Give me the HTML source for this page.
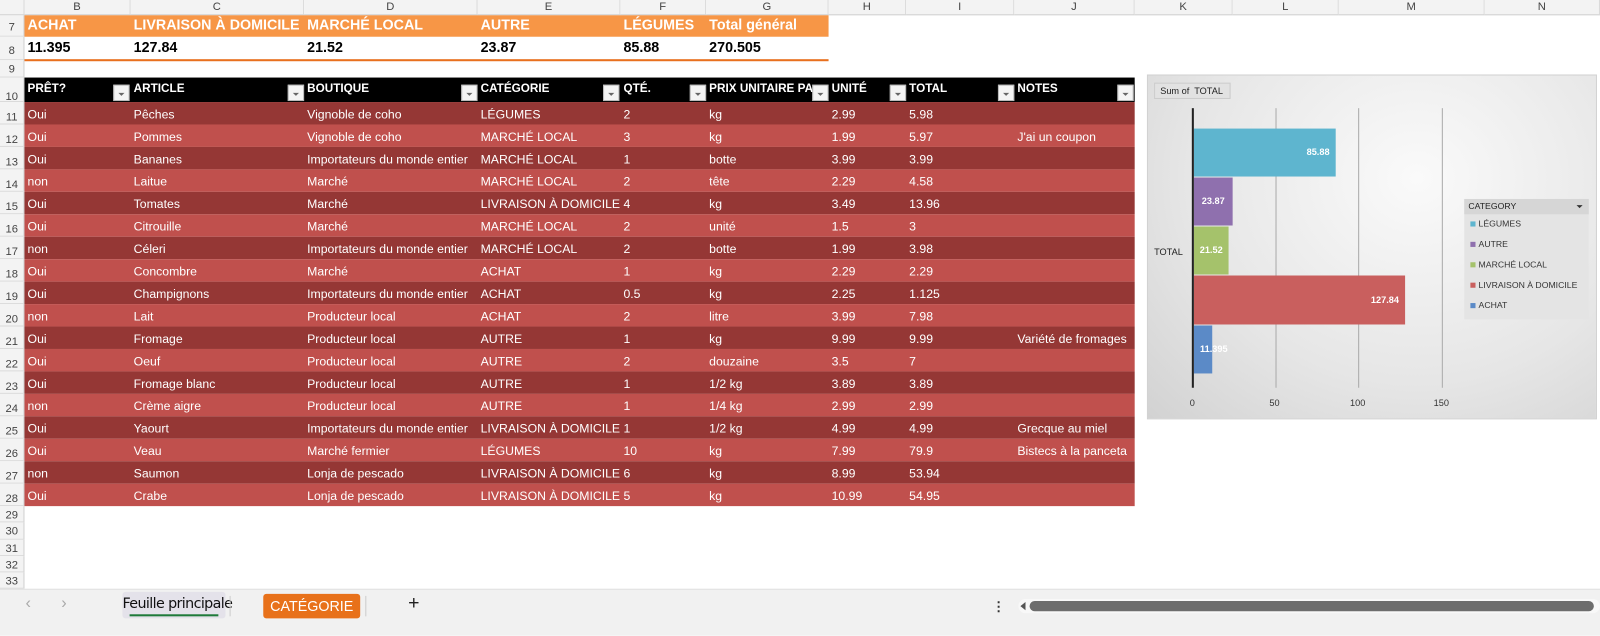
<!DOCTYPE html>
<html><head><meta charset="utf-8"><style>
*{margin:0;padding:0;box-sizing:border-box}
html,body{width:1600px;height:623px;overflow:hidden;background:#fff}
#w{position:absolute;left:0;top:0;width:1568px;height:611px;transform:scale(1.0204);transform-origin:0 0;font-family:"Liberation Sans",Arial,sans-serif;font-size:12px}
.a{position:absolute;white-space:nowrap}
.ch{top:0;height:15px;background:#f3f3f3;border-right:1px solid #dadada;border-bottom:1px solid #d0d0d0;text-align:center;font-size:11px;color:#444;line-height:14px}
.rh{left:0;width:24px;background:#f3f3f3;border-bottom:1px solid #dadada;border-right:1px solid #d0d0d0;text-align:center;font-size:11px;color:#444}
.row{left:24px;width:1088px;height:22px;color:#fff;font-size:12px;line-height:24px}
.row span{position:absolute;top:0}
.d{background:#953735}.l{background:#c0504d}
.hd span{position:absolute;color:#fff;font-weight:bold;font-size:11.5px;top:5px}
.fb{position:absolute;top:83px;width:16px;height:16px;background:#f4f4f4;border:1px solid #bbb}
.fb:after{content:"";position:absolute;left:4px;top:7px;border-left:3px solid transparent;border-right:3px solid transparent;border-top:3px solid #666}
</style></head><body><div id="w">
<div class="a ch" style="left:0;width:24px"></div>
<div class="a ch" style="left:24px;width:104px">B</div>
<div class="a ch" style="left:128px;width:170px">C</div>
<div class="a ch" style="left:298px;width:170px">D</div>
<div class="a ch" style="left:468px;width:140px">E</div>
<div class="a ch" style="left:608px;width:84px">F</div>
<div class="a ch" style="left:692px;width:120px">G</div>
<div class="a ch" style="left:812px;width:76px">H</div>
<div class="a ch" style="left:888px;width:106px">I</div>
<div class="a ch" style="left:994px;width:118px">J</div>
<div class="a ch" style="left:1112px;width:96px">K</div>
<div class="a ch" style="left:1208px;width:104px">L</div>
<div class="a ch" style="left:1312px;width:143px">M</div>
<div class="a ch" style="left:1455px;width:113px">N</div>
<div class="a rh" style="top:15px;height:21px;line-height:24px">7</div>
<div class="a rh" style="top:36px;height:23px;line-height:28px">8</div>
<div class="a rh" style="top:59px;height:17px;line-height:18px">9</div>
<div class="a rh" style="top:76px;height:24px;line-height:38px">10</div>
<div class="a rh" style="top:100px;height:22px;line-height:30px">11</div>
<div class="a rh" style="top:122px;height:22px;line-height:30px">12</div>
<div class="a rh" style="top:144px;height:22px;line-height:30px">13</div>
<div class="a rh" style="top:166px;height:22px;line-height:30px">14</div>
<div class="a rh" style="top:188px;height:22px;line-height:30px">15</div>
<div class="a rh" style="top:210px;height:22px;line-height:30px">16</div>
<div class="a rh" style="top:232px;height:22px;line-height:30px">17</div>
<div class="a rh" style="top:254px;height:22px;line-height:30px">18</div>
<div class="a rh" style="top:276px;height:22px;line-height:30px">19</div>
<div class="a rh" style="top:298px;height:22px;line-height:30px">20</div>
<div class="a rh" style="top:320px;height:22px;line-height:30px">21</div>
<div class="a rh" style="top:342px;height:22px;line-height:30px">22</div>
<div class="a rh" style="top:364px;height:22px;line-height:30px">23</div>
<div class="a rh" style="top:386px;height:22px;line-height:30px">24</div>
<div class="a rh" style="top:408px;height:22px;line-height:30px">25</div>
<div class="a rh" style="top:430px;height:22px;line-height:30px">26</div>
<div class="a rh" style="top:452px;height:22px;line-height:30px">27</div>
<div class="a rh" style="top:474px;height:22px;line-height:30px">28</div>
<div class="a rh" style="top:496px;height:16px;line-height:18px">29</div>
<div class="a rh" style="top:512px;height:17px;line-height:18px">30</div>
<div class="a rh" style="top:529px;height:16px;line-height:18px">31</div>
<div class="a rh" style="top:545px;height:16px;line-height:18px">32</div>
<div class="a rh" style="top:561px;height:16px;line-height:18px">33</div>
<div class="a" style="left:24px;top:15px;width:788px;height:21px;background:#f79646"></div>
<div class="a" style="top:16px;left:27px;color:#fff;font-weight:bold;font-size:14px">ACHAT</div>
<div class="a" style="top:16px;left:131px;color:#fff;font-weight:bold;font-size:14px">LIVRAISON À DOMICILE</div>
<div class="a" style="top:16px;left:301px;color:#fff;font-weight:bold;font-size:14px">MARCHÉ LOCAL</div>
<div class="a" style="top:16px;left:471px;color:#fff;font-weight:bold;font-size:14px">AUTRE</div>
<div class="a" style="top:16px;left:611px;color:#fff;font-weight:bold;font-size:14px">LÉGUMES</div>
<div class="a" style="top:16px;left:695px;color:#fff;font-weight:bold;font-size:14px">Total général</div>
<div class="a" style="top:38px;left:27px;font-weight:bold;font-size:14px">11.395</div>
<div class="a" style="top:38px;left:131px;font-weight:bold;font-size:14px">127.84</div>
<div class="a" style="top:38px;left:301px;font-weight:bold;font-size:14px">21.52</div>
<div class="a" style="top:38px;left:471px;font-weight:bold;font-size:14px">23.87</div>
<div class="a" style="top:38px;left:611px;font-weight:bold;font-size:14px">85.88</div>
<div class="a" style="top:38px;left:695px;font-weight:bold;font-size:14px">270.505</div>
<div class="a" style="left:24px;top:58px;width:788px;height:2px;background:#e8701e"></div>
<div class="a hd" style="left:24px;top:76px;width:1088px;height:24px;background:#000">
<span style="left:3px">PRÊT?</span><span style="left:107px">ARTICLE</span><span style="left:277px">BOUTIQUE</span><span style="left:447px">CATÉGORIE</span><span style="left:587px">QTÉ.</span><span style="left:671px">PRIX UNITAIRE PA</span><span style="left:791px">UNITÉ</span><span style="left:867px">TOTAL</span><span style="left:973px">NOTES</span>
</div>
<div class="fb" style="left:111px"></div><div class="fb" style="left:282px"></div><div class="fb" style="left:452px"></div><div class="fb" style="left:591px"></div><div class="fb" style="left:676px"></div><div class="fb" style="left:796px"></div><div class="fb" style="left:872px"></div><div class="fb" style="left:978px"></div><div class="fb" style="left:1095px"></div>
<div class="a row d" style="top:100px"><span style="left:3px">Oui</span><span style="left:107px">Pêches</span><span style="left:277px">Vignoble de coho</span><span style="left:447px">LÉGUMES</span><span style="left:587px">2</span><span style="left:671px">kg</span><span style="left:791px">2.99</span><span style="left:867px">5.98</span></div>
<div class="a row l" style="top:122px"><span style="left:3px">Oui</span><span style="left:107px">Pommes</span><span style="left:277px">Vignoble de coho</span><span style="left:447px">MARCHÉ LOCAL</span><span style="left:587px">3</span><span style="left:671px">kg</span><span style="left:791px">1.99</span><span style="left:867px">5.97</span><span style="left:973px">J'ai un coupon</span></div>
<div class="a row d" style="top:144px"><span style="left:3px">Oui</span><span style="left:107px">Bananes</span><span style="left:277px">Importateurs du monde entier</span><span style="left:447px">MARCHÉ LOCAL</span><span style="left:587px">1</span><span style="left:671px">botte</span><span style="left:791px">3.99</span><span style="left:867px">3.99</span></div>
<div class="a row l" style="top:166px"><span style="left:3px">non</span><span style="left:107px">Laitue</span><span style="left:277px">Marché</span><span style="left:447px">MARCHÉ LOCAL</span><span style="left:587px">2</span><span style="left:671px">tête</span><span style="left:791px">2.29</span><span style="left:867px">4.58</span></div>
<div class="a row d" style="top:188px"><span style="left:3px">Oui</span><span style="left:107px">Tomates</span><span style="left:277px">Marché</span><span style="left:447px">LIVRAISON À DOMICILE</span><span style="left:587px">4</span><span style="left:671px">kg</span><span style="left:791px">3.49</span><span style="left:867px">13.96</span></div>
<div class="a row l" style="top:210px"><span style="left:3px">Oui</span><span style="left:107px">Citrouille</span><span style="left:277px">Marché</span><span style="left:447px">MARCHÉ LOCAL</span><span style="left:587px">2</span><span style="left:671px">unité</span><span style="left:791px">1.5</span><span style="left:867px">3</span></div>
<div class="a row d" style="top:232px"><span style="left:3px">non</span><span style="left:107px">Céleri</span><span style="left:277px">Importateurs du monde entier</span><span style="left:447px">MARCHÉ LOCAL</span><span style="left:587px">2</span><span style="left:671px">botte</span><span style="left:791px">1.99</span><span style="left:867px">3.98</span></div>
<div class="a row l" style="top:254px"><span style="left:3px">Oui</span><span style="left:107px">Concombre</span><span style="left:277px">Marché</span><span style="left:447px">ACHAT</span><span style="left:587px">1</span><span style="left:671px">kg</span><span style="left:791px">2.29</span><span style="left:867px">2.29</span></div>
<div class="a row d" style="top:276px"><span style="left:3px">Oui</span><span style="left:107px">Champignons</span><span style="left:277px">Importateurs du monde entier</span><span style="left:447px">ACHAT</span><span style="left:587px">0.5</span><span style="left:671px">kg</span><span style="left:791px">2.25</span><span style="left:867px">1.125</span></div>
<div class="a row l" style="top:298px"><span style="left:3px">non</span><span style="left:107px">Lait</span><span style="left:277px">Producteur local</span><span style="left:447px">ACHAT</span><span style="left:587px">2</span><span style="left:671px">litre</span><span style="left:791px">3.99</span><span style="left:867px">7.98</span></div>
<div class="a row d" style="top:320px"><span style="left:3px">Oui</span><span style="left:107px">Fromage</span><span style="left:277px">Producteur local</span><span style="left:447px">AUTRE</span><span style="left:587px">1</span><span style="left:671px">kg</span><span style="left:791px">9.99</span><span style="left:867px">9.99</span><span style="left:973px">Variété de fromages</span></div>
<div class="a row l" style="top:342px"><span style="left:3px">Oui</span><span style="left:107px">Oeuf</span><span style="left:277px">Producteur local</span><span style="left:447px">AUTRE</span><span style="left:587px">2</span><span style="left:671px">douzaine</span><span style="left:791px">3.5</span><span style="left:867px">7</span></div>
<div class="a row d" style="top:364px"><span style="left:3px">Oui</span><span style="left:107px">Fromage blanc</span><span style="left:277px">Producteur local</span><span style="left:447px">AUTRE</span><span style="left:587px">1</span><span style="left:671px">1/2 kg</span><span style="left:791px">3.89</span><span style="left:867px">3.89</span></div>
<div class="a row l" style="top:386px"><span style="left:3px">non</span><span style="left:107px">Crème aigre</span><span style="left:277px">Producteur local</span><span style="left:447px">AUTRE</span><span style="left:587px">1</span><span style="left:671px">1/4 kg</span><span style="left:791px">2.99</span><span style="left:867px">2.99</span></div>
<div class="a row d" style="top:408px"><span style="left:3px">Oui</span><span style="left:107px">Yaourt</span><span style="left:277px">Importateurs du monde entier</span><span style="left:447px">LIVRAISON À DOMICILE</span><span style="left:587px">1</span><span style="left:671px">1/2 kg</span><span style="left:791px">4.99</span><span style="left:867px">4.99</span><span style="left:973px">Grecque au miel</span></div>
<div class="a row l" style="top:430px"><span style="left:3px">Oui</span><span style="left:107px">Veau</span><span style="left:277px">Marché fermier</span><span style="left:447px">LÉGUMES</span><span style="left:587px">10</span><span style="left:671px">kg</span><span style="left:791px">7.99</span><span style="left:867px">79.9</span><span style="left:973px">Bistecs à la panceta</span></div>
<div class="a row d" style="top:452px"><span style="left:3px">non</span><span style="left:107px">Saumon</span><span style="left:277px">Lonja de pescado</span><span style="left:447px">LIVRAISON À DOMICILE</span><span style="left:587px">6</span><span style="left:671px">kg</span><span style="left:791px">8.99</span><span style="left:867px">53.94</span></div>
<div class="a row l" style="top:474px"><span style="left:3px">Oui</span><span style="left:107px">Crabe</span><span style="left:277px">Lonja de pescado</span><span style="left:447px">LIVRAISON À DOMICILE</span><span style="left:587px">5</span><span style="left:671px">kg</span><span style="left:791px">10.99</span><span style="left:867px">54.95</span></div>
<div class="a" style="left:1124px;top:73px;width:441px;height:338px;border:1px solid #d0d0d0;background:radial-gradient(ellipse at 60% 30%,#fafafa 0%,#e6e6e6 60%,#d2d2d2 100%)"></div>
<div class="a" style="left:1131px;top:81px;width:75px;height:16px;background:#e2e2e2;border:1px solid #ccc;font-size:9px;line-height:15px;padding-left:5px;color:#222">Sum of&nbsp; TOTAL</div>
<div class="a" style="left:1250px;top:106px;width:1px;height:274px;background:#aaa"></div>
<div class="a" style="left:1331px;top:106px;width:1px;height:274px;background:#aaa"></div>
<div class="a" style="left:1413px;top:106px;width:1px;height:274px;background:#aaa"></div>
<div class="a" style="left:1170px;top:126px;width:139px;height:47px;background:#5eb5cf;color:#fff;font-weight:bold;font-size:9px;line-height:47px;text-align:right;padding-right:6px">85.88</div>
<div class="a" style="left:1170px;top:174px;width:38px;height:47px;background:#8f70ae;color:#fff;font-weight:bold;font-size:9px;line-height:47px;text-align:center">23.87</div>
<div class="a" style="left:1170px;top:222px;width:34px;height:47px;background:#a5c26b;color:#fff;font-weight:bold;font-size:9px;line-height:47px;text-align:center">21.52</div>
<div class="a" style="left:1170px;top:270px;width:207px;height:48px;background:#c95f5e;color:#fff;font-weight:bold;font-size:9px;line-height:48px;text-align:right;padding-right:6px">127.84</div>
<div class="a" style="left:1170px;top:319px;width:18px;height:47px;background:#5b8ac7;color:#fff;font-weight:bold;font-size:9px;line-height:47px;padding-left:6px">11.395</div>
<div class="a" style="left:1168px;top:106px;width:2px;height:274px;background:#222"></div>
<div class="a" style="left:1131px;top:242px;font-size:9px;color:#222">TOTAL</div>
<div class="a" style="left:1166px;top:390px;font-size:9px;color:#333">0</div>
<div class="a" style="left:1244px;top:390px;font-size:9px;color:#333">50</div>
<div class="a" style="left:1323px;top:390px;font-size:9px;color:#333">100</div>
<div class="a" style="left:1405px;top:390px;font-size:9px;color:#333">150</div>
<div class="a" style="left:1435px;top:195px;width:122px;height:118px;background:#e4e4e4"></div>
<div class="a" style="left:1435px;top:195px;width:122px;height:15px;background:#d6d6d6;font-size:8.5px;line-height:15px;padding-left:4px;color:#222">CATEGORY<span style="position:absolute;right:6px;top:6px;border-left:3px solid transparent;border-right:3px solid transparent;border-top:3px solid #333"></span></div>
<div class="a" style="left:1441px;top:214px;font-size:8.5px;color:#333"><span style="display:inline-block;width:5px;height:5px;background:#5eb5cf;margin-right:3px"></span>LÉGUMES</div>
<div class="a" style="left:1441px;top:234px;font-size:8.5px;color:#333"><span style="display:inline-block;width:5px;height:5px;background:#8f70ae;margin-right:3px"></span>AUTRE</div>
<div class="a" style="left:1441px;top:254px;font-size:8.5px;color:#333"><span style="display:inline-block;width:5px;height:5px;background:#a5c26b;margin-right:3px"></span>MARCHÉ LOCAL</div>
<div class="a" style="left:1441px;top:274px;font-size:8.5px;color:#333"><span style="display:inline-block;width:5px;height:5px;background:#c95f5e;margin-right:3px"></span>LIVRAISON À DOMICILE</div>
<div class="a" style="left:1441px;top:294px;font-size:8.5px;color:#333"><span style="display:inline-block;width:5px;height:5px;background:#5b8ac7;margin-right:3px"></span>ACHAT</div>
<div class="a" style="left:0;top:577px;width:1600px;height:46px;background:#f1f1f1;border-top:1px solid #e0e0e0"></div>
<div class="a" style="left:25px;top:583px;font-size:16px;color:#aaa">‹</div>
<div class="a" style="left:60px;top:583px;font-size:16px;color:#aaa">›</div>
<div class="a" style="left:120px;top:580px;width:101px;height:26px;background:#e4e2ea;border-radius:3px;font-size:14px;line-height:25px;text-align:center;color:#111;font-family:'DejaVu Sans',sans-serif;letter-spacing:-0.6px">Feuille principale</div>
<div class="a" style="left:127px;top:602px;width:87px;height:2px;background:#1e7a3a"></div>
<div class="a" style="left:225px;top:584px;width:1px;height:20px;background:#ccc"></div>
<div class="a" style="left:258px;top:582px;width:95px;height:24px;background:#e8711a;border-radius:3px;color:#fff;font-size:14px;line-height:25px;text-align:center">CATÉGORIE</div>
<div class="a" style="left:358px;top:584px;width:1px;height:20px;background:#ccc"></div>
<div class="a" style="left:400px;top:581px;font-size:19px;color:#222">+</div>
<div class="a" style="left:972px;top:587px;font-size:13px;color:#333;font-weight:bold">⋮</div>
<div class="a" style="left:998px;top:587px;width:570px;height:14px;background:#f8f8f8;border-radius:7px"></div>
<div class="a" style="left:1000px;top:590px;border-top:4px solid transparent;border-bottom:4px solid transparent;border-right:5px solid #555"></div>
<div class="a" style="left:1009px;top:589px;width:553px;height:10px;background:#6d6d6d;border-radius:5px"></div>
</div></body></html>
